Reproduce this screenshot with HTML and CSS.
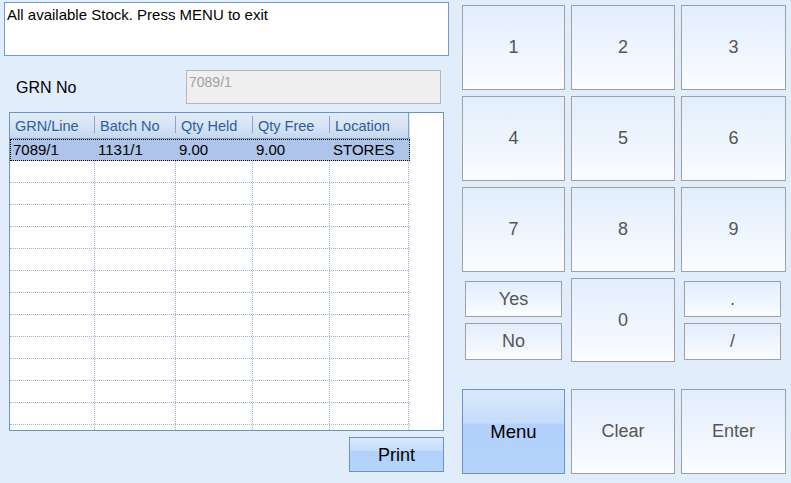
FILE: index.html
```html
<!DOCTYPE html>
<html>
<head>
<meta charset="utf-8">
<link rel="stylesheet" href="styles.css">
</head>
<body>
<div class="app">
  <div class="left">
    <div class="msg">All available Stock. Press MENU to exit</div>
    <div class="grn-row">
      <span class="grn-label">GRN No</span>
      <div class="grn-input">7089/1</div>
    </div>
    <div class="grid">
      <div class="table">
        <div class="hrow">
          <div class="hc c1">GRN/Line</div>
          <div class="hc c2">Batch No</div>
          <div class="hc c3">Qty Held</div>
          <div class="hc c4">Qty Free</div>
          <div class="hc c5">Location</div>
        </div>
        <div class="row sel">
          <div class="cell c1">7089/1</div>
          <div class="cell c2">1131/1</div>
          <div class="cell c3">9.00</div>
          <div class="cell c4">9.00</div>
          <div class="cell c5">STORES</div>
        </div>
        <div class="row"><div class="cell c1"></div><div class="cell c2"></div><div class="cell c3"></div><div class="cell c4"></div><div class="cell c5"></div></div>
        <div class="row"><div class="cell c1"></div><div class="cell c2"></div><div class="cell c3"></div><div class="cell c4"></div><div class="cell c5"></div></div>
        <div class="row"><div class="cell c1"></div><div class="cell c2"></div><div class="cell c3"></div><div class="cell c4"></div><div class="cell c5"></div></div>
        <div class="row"><div class="cell c1"></div><div class="cell c2"></div><div class="cell c3"></div><div class="cell c4"></div><div class="cell c5"></div></div>
        <div class="row"><div class="cell c1"></div><div class="cell c2"></div><div class="cell c3"></div><div class="cell c4"></div><div class="cell c5"></div></div>
        <div class="row"><div class="cell c1"></div><div class="cell c2"></div><div class="cell c3"></div><div class="cell c4"></div><div class="cell c5"></div></div>
        <div class="row"><div class="cell c1"></div><div class="cell c2"></div><div class="cell c3"></div><div class="cell c4"></div><div class="cell c5"></div></div>
        <div class="row"><div class="cell c1"></div><div class="cell c2"></div><div class="cell c3"></div><div class="cell c4"></div><div class="cell c5"></div></div>
        <div class="row"><div class="cell c1"></div><div class="cell c2"></div><div class="cell c3"></div><div class="cell c4"></div><div class="cell c5"></div></div>
        <div class="row"><div class="cell c1"></div><div class="cell c2"></div><div class="cell c3"></div><div class="cell c4"></div><div class="cell c5"></div></div>
        <div class="row"><div class="cell c1"></div><div class="cell c2"></div><div class="cell c3"></div><div class="cell c4"></div><div class="cell c5"></div></div>
        <div class="row"><div class="cell c1"></div><div class="cell c2"></div><div class="cell c3"></div><div class="cell c4"></div><div class="cell c5"></div></div>
        <div class="row"><div class="cell c1"></div><div class="cell c2"></div><div class="cell c3"></div><div class="cell c4"></div><div class="cell c5"></div></div>
      </div>
    </div>
    <div class="print-row">
      <div class="btn-blue print">Print</div>
    </div>
  </div>
  <div class="keypad">
    <div class="key k1">1</div>
    <div class="key k2">2</div>
    <div class="key k3">3</div>
    <div class="key k4">4</div>
    <div class="key k5">5</div>
    <div class="key k6">6</div>
    <div class="key k7">7</div>
    <div class="key k8">8</div>
    <div class="key k9">9</div>
    <div class="pair">
      <div class="key small">Yes</div>
      <div class="key small">No</div>
    </div>
    <div class="key k0">0</div>
    <div class="pair right">
      <div class="key small">.</div>
      <div class="key small">/</div>
    </div>
    <div class="btn-blue menu">Menu</div>
    <div class="key clear">Clear</div>
    <div class="key enter">Enter</div>
  </div>
</div>
</body>
</html>
```

FILE: styles.css
```css
* { box-sizing: border-box; }
html, body {
  margin: 0;
  padding: 0;
  background: #e2edfc;
  font-family: "Liberation Sans", Arial, sans-serif;
  width: 791px;
  height: 483px;
  overflow: hidden;
}
.app {
  display: flex;
  width: 791px;
  height: 483px;
}
.left {
  width: 462px;
  padding: 2px 0 0 4px;
  display: flex;
  flex-direction: column;
}
.msg {
  width: 445px;
  height: 54px;
  background: #fff;
  border: 1px solid #6f9bd8;
  font-size: 15px;
  color: #000;
  padding: 3px 0 0 2px;
  line-height: 17px;
}
.grn-row {
  display: flex;
  align-items: center;
  margin-top: 14px;
  height: 34px;
}
.grn-label {
  margin-left: 12px;
  width: 170px;
  font-size: 16px;
  color: #000;
  padding-top: 2px;
}
.grn-input {
  width: 255px;
  height: 34px;
  background: #efefef;
  border: 1px solid #b7b7b7;
  color: #a2a2a2;
  font-size: 14px;
  padding: 3px 0 0 2px;
  line-height: 16px;
}
.grid {
  margin-top: 8px;
  margin-left: 5px;
  width: 435px;
  height: 319px;
  background: #fff;
  border: 1px solid #6b93c9;
  overflow: hidden;
}
.table {
  width: 400px;
}
.hrow {
  display: flex;
  background: linear-gradient(#e2ecf8, #d8e4f4 50%, #c6d8ee);
  border-bottom: 1px solid #7fa0cc;
  height: 26px;
}
.hc {
  font-size: 14.5px;
  color: #2e5d9d;
  line-height: 26px;
  padding-left: 5px;
  position: relative;
  white-space: nowrap;
}
.hc::after {
  content: "";
  position: absolute;
  right: 0;
  top: 3px;
  bottom: 5px;
  width: 1px;
  background: #86a7d4;
}
.hc.c5::after { top: 0; bottom: 0; background: #7fa0cc; }
.c1 { width: 85px; }
.c2 { width: 81px; }
.c3 { width: 77px; }
.c4 { width: 77px; }
.c5 { width: 79px; }
.row {
  display: flex;
  height: 22px;
  border-bottom: 1px dotted #9fb6d8;
}
.cell {
  height: 21px;
  border-right: 1px dotted #9fb6d8;
  font-size: 15px;
  line-height: 21px;
  padding-left: 3px;
  color: #000;
  white-space: nowrap;
}
.row.sel {
  background: #aec4e9;
  outline: 1px dotted #000;
  outline-offset: -1px;
  border-bottom: none;
}
.row.sel .cell {
  border-right: 1px solid transparent;
  height: 22px;
  line-height: 22px;
}
.print-row {
  display: flex;
  justify-content: flex-end;
  width: 440px;
  margin-top: 6px;
}
.btn-blue {
  border: 1px solid #6b93c9;
  background: linear-gradient(#dbe9fd, #c4dcfb 40%, #b1d1fb 41%, #b5d4fb);
  color: #000;
  display: flex;
  align-items: center;
  justify-content: center;
  font-size: 18px;
}
.print {
  width: 95px;
  height: 35px;
  padding-top: 1px;
}
.keypad {
  display: grid;
  grid-template-columns: 103px 104px 105px;
  grid-template-rows: 85px 85px 85px 84px 85px;
  column-gap: 6px;
  row-gap: 6px;
  padding-top: 5px;
  height: 483px;
  align-content: start;
}
.key {
  border: 1px solid #a0a0a0;
  background: linear-gradient(#e2eefd, #f0f6fe 60%, #fbfdff);
  color: #555;
  font-size: 18px;
  display: flex;
  align-items: center;
  justify-content: center;
}
.pair {
  display: flex;
  flex-direction: column;
  gap: 6px;
  padding: 3px 3px 2px 3px;
}
.pair.right {
  padding-right: 5px;
}
.pair .small {
  height: 36px;
  flex: none;
}
.pair .small + .small { height: 37px; }
.menu, .clear, .enter {
  margin-top: 21px;
  height: 85px;
}
.menu { font-size: 18.5px; }
```
